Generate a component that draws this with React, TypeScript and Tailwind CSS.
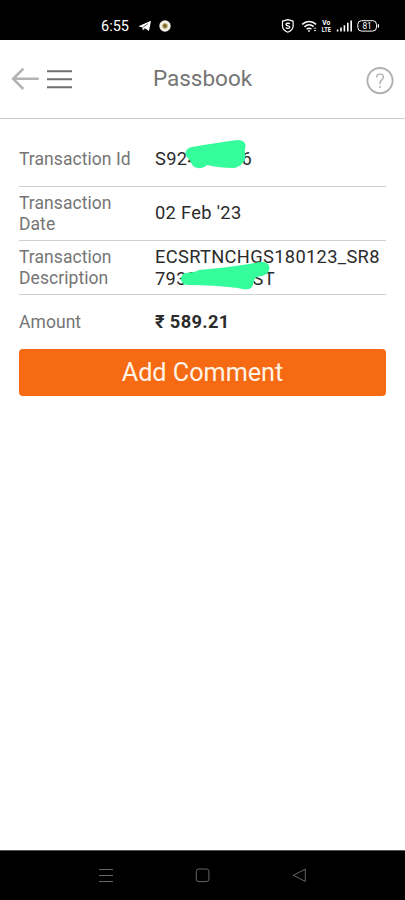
import React from "react";

function StatusBar() {
  return (
    <div className="h-10 shrink-0 bg-black flex items-center justify-between pl-[101px] pr-[25px] pt-3 text-white">
      <div className="flex items-center">
        <span className="w-[28px] pt-px text-[14.5px] leading-4">6:55</span>
        <svg className="ml-[9px]" width="14" height="12" viewBox="0 0 14 12">
          <path d="M0.5 6.2L13 0.8L11 11L6.8 8.2L4.8 10.4L4.4 7.4Z" fill="#fff" />
          <path d="M4.8 7.4L9.8 3.8" stroke="#000" strokeWidth="0.6" />
        </svg>
        <svg className="ml-[7px]" width="12" height="12" viewBox="0 0 12 12">
          <circle cx="6" cy="6" r="5.7" fill="#f4f1e8" />
          <circle cx="6" cy="6" r="2.7" fill="#a8924a" />
          <path d="M4.8 5L6 4.2L7.2 6.2L6 7.4Z" fill="#5c5228" />
        </svg>
      </div>

      <svg width="99" height="16" viewBox="0 0 99 16" fill="none" stroke="#fff">
        {/* Shield */}
        <path
          d="M6.8 1.7L12.1 3.2V8.3C12.1 11 10 13 6.8 14.2C3.6 13 1.5 11 1.5 8.3V3.2Z"
          strokeWidth="1.2"
          strokeLinejoin="round"
        />
        <path
          d="M8.8 5.9C8.2 5 5 4.9 5 6.5C5 8.2 8.8 7.4 8.8 9.2C8.8 10.8 5.4 10.7 4.8 9.7"
          strokeWidth="1.3"
        />
        {/* Wifi */}
        <path d="M21.2 6.3C25.3 2.5 31 2.5 35 6.3" strokeWidth="1.6" />
        <path d="M23.5 8.9C26.4 6.3 29.9 6.3 32.6 8.7" strokeWidth="1.6" />
        <path d="M25.7 11.2C27.4 9.8 28.8 9.8 30.4 11.2" strokeWidth="1.5" />
        <circle cx="28" cy="12.9" r="0.9" fill="#fff" stroke="none" />
        <path d="M32.9 10.8L34 9.7L35.1 10.8M32.9 12L34 13.1L35.1 12" strokeWidth="0.9" />
        <g fill="#fff" stroke="none" fontFamily="Roboto, sans-serif" fontWeight="700" fontSize="6.5">
          <text x="41.2" y="6.6" textLength="8" lengthAdjust="spacingAndGlyphs">Vo</text>
          <text x="40.8" y="14.2" textLength="9" lengthAdjust="spacingAndGlyphs">LTE</text>
        </g>
        {/* Signal */}
        <path
          d="M56.6 13.6V11.5M60 13.6V9.5M63.4 13.6V7.2M66.8 13.6V4.8M70.2 13.6V2.5"
          strokeWidth="1.6"
        />
        {/* Battery */}
        <rect x="76.8" y="2.7" width="18.7" height="10.4" rx="3.8" strokeWidth="1" />
        <path d="M97.4 6.2V9.6" strokeWidth="1.3" />
        <text
          x="86.1"
          y="10.8"
          fill="#fff"
          stroke="none"
          fontFamily="Roboto, sans-serif"
          fontSize="8.3"
          textAnchor="middle"
        >
          81
        </text>
      </svg>
    </div>
  );
}

function Header() {
  return (
    <header className="relative h-[79px] shrink-0 border-b border-[#cdcdcd] flex items-center justify-between pl-[11px] pr-[11px]">
      <div className="flex items-center gap-2">
        <svg width="28" height="24" viewBox="0 0 28 24" fill="none" stroke="#b3b3b3" strokeWidth="2.6">
          <path d="M27.8 11.8H2.5M12.3 1.6L2.2 11.8L12.3 22" />
        </svg>
        <svg width="25" height="20" viewBox="0 0 25 20" stroke="#707070" strokeWidth="2">
          <path d="M0 2.3H25M0 10.3H25M0 18.3H25" />
        </svg>
      </div>
      <h1 className="absolute left-0 right-0 top-[22px] text-center text-[22.5px] leading-8 text-[#757575] pointer-events-none">
        Passbook
      </h1>
      <svg className="mt-1" width="28" height="28" viewBox="0 0 28 28" fill="none" stroke="#b0b0b0">
        <circle cx="14" cy="13.6" r="12.6" strokeWidth="1.9" />
        <path
          d="M10.6 10.4C10.6 8.3 12 7.1 14 7.1C16 7.1 17.4 8.4 17.4 10.2C17.4 12.9 14 12.9 14 16.2V17.2"
          strokeWidth="1.4"
        />
        <circle cx="14" cy="20" r="1" fill="#b0b0b0" stroke="none" />
      </svg>
    </header>
  );
}

function Row({
  label,
  className,
  children,
}: {
  label: string;
  className: string;
  children: React.ReactNode;
}) {
  return (
    <div className={`flex items-center ${className}`}>
      <div className="w-[136px] shrink-0 text-[17.5px] leading-[21px] tracking-[0.06px] text-[#757575]">
        <span className="block w-[116px]">{label}</span>
      </div>
      <div className="flex-1 text-[18.3px] leading-[22px] tracking-[0.33px] text-[#2b2b2b]">
        {children}
      </div>
    </div>
  );
}

export default function App() {
  return (
    <div className="w-[405px] h-[900px] flex flex-col bg-white font-['Roboto',sans-serif] overflow-hidden">
      <StatusBar />
      <Header />

      <main className="flex-1 px-[19px]">
        <Row label="Transaction Id" className="h-[68px] pt-[13px] border-b border-[#d0d0d0]">
          <div className="relative flex w-[97px] justify-between">
            <span>S924</span>
            <span>6</span>
            <svg className="absolute left-[29px] -top-[8px]" width="64" height="32" viewBox="0 0 64 32">
              <path
                d="M8 7C24 4 38 2 54 0C60 0 63 4 61 9C60 12 62 14 61 17C61 22 56 27 50 28C40 28 31 27 23 25C19 29 13 29 9 26C7 23 6 20 3 17C0 13 2 8 8 7Z"
                fill="#35fd9b"
              />
            </svg>
          </div>
        </Row>
        <Row label="Transaction Date" className="h-[54px] border-b border-[#d0d0d0]">
          <span className="relative -top-px">02 Feb '23</span>
        </Row>
        <Row label="Transaction Description" className="h-[54px] border-b border-[#d0d0d0]">
          <div>ECSRTNCHGS180123_SR8</div>
          <div className="relative flex w-[120px] justify-between">
            <span>7933</span>
            <span>ST</span>
            <svg className="absolute left-[25px] -top-[6px]" width="92" height="30" viewBox="0 0 92 30">
              <path
                d="M6 11C10 10 14 11 19 8C42 6 60 4 80 0C86 -1 91 3 89 8C88 13 82 14 77 15C73 17 74 22 72 25C70 28 64 28 58 26C42 24 25 23 8 23C3 23 1 20 1 16C2 13 3 11 6 11Z"
                fill="#35fd9b"
              />
            </svg>
          </div>
        </Row>
        <Row label="Amount" className="h-[54px]">
          <span className="font-bold">₹ 589.21</span>
        </Row>
        <button className="block w-full h-[47px] rounded-[4px] bg-[#f56a12] text-[25.2px] text-[#fff3e6]">
          Add Comment
        </button>
      </main>

      <nav className="h-[50px] shrink-0 bg-black border-t border-[#555]">
        <div className="flex h-full items-center justify-between pl-[98px] pr-[98px]">
          <svg width="16" height="16" viewBox="0 0 16 16" stroke="#666" strokeWidth="1">
            <path d="M1 1.5H15M1 7.5H15M1 13.5H15" />
          </svg>
          <svg width="16" height="16" viewBox="0 0 16 16" fill="none" stroke="#666">
            <rect x="1.3" y="1" width="12.6" height="12.6" rx="2.5" />
          </svg>
          <svg width="16" height="16" viewBox="0 0 16 16" fill="none" stroke="#666" strokeLinejoin="round">
            <path d="M2.3 7.3L14.3 1.2V13.4Z" />
          </svg>
        </div>
      </nav>
    </div>
  );
}
